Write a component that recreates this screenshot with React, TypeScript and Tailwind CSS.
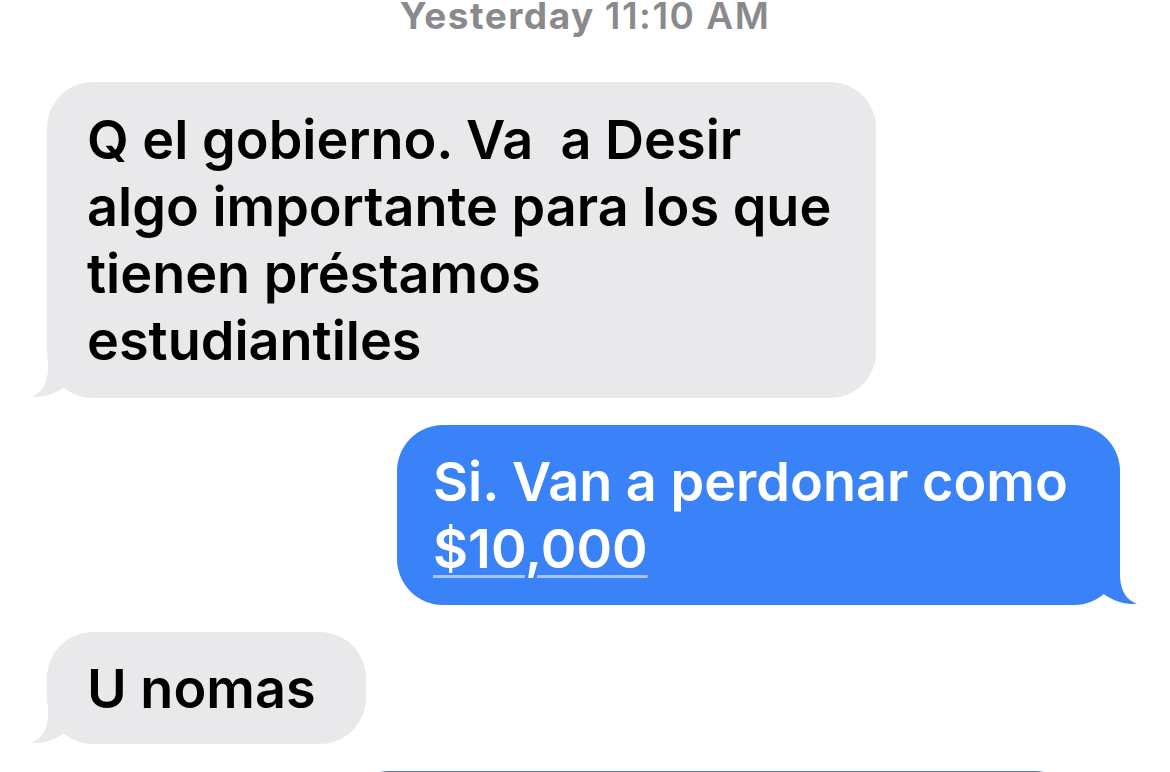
const font = { fontFamily: 'Inter, "Noto Sans", "Liberation Sans", sans-serif' };

function TailLeft() {
  return (
    <svg
      className="absolute bottom-0 left-[-17px] h-[50px] w-[60px]"
      viewBox="0 0 60 50"
      aria-hidden
    >
      <path d="M18 5 L18 22 C17 38 10 46 1 48.5 C10 50 22 48 36 38 L58 5 Z" fill="#e9e9eb" />
    </svg>
  );
}

function TailRight() {
  return (
    <svg
      className="absolute bottom-0 right-[-18px] h-[50px] w-[60px]"
      viewBox="0 0 60 50"
      aria-hidden
    >
      <path d="M42 5 L42 22 C43 38 50 46 59 48.5 C50 50 38 48 24 38 L2 5 Z" fill="#3a82f7" />
    </svg>
  );
}

function Received({ lines, width, pad }: { lines: string[]; width: string; pad: string }) {
  return (
    <div className={`relative self-start rounded-[46px] bg-[#e9e9eb] pl-10 ${pad} ${width}`}>
      <TailLeft />
      <p className="relative whitespace-nowrap text-[54px] font-semibold leading-[67px] text-black">
        {lines.map((l, i) => (
          <span key={i} className="block">
            {l}
          </span>
        ))}
      </p>
    </div>
  );
}

export default function App() {
  return (
    <div className="h-[772px] w-[1170px] overflow-hidden bg-white" style={font}>
      <div className="flex h-[31px] items-center justify-center text-[37px] leading-[31px] tracking-[1.5px] text-[#8a8a8e]">
        <span className="font-bold">Yesterday</span>
        <span className="ml-[10px] font-semibold">11:10 AM</span>
      </div>

      <div className="mt-[51px] flex flex-col gap-[27px] pl-[47px] pr-[50px]">
        <Received
          width="w-[829px]"
          pad="py-[24px]"
          lines={[
            'Q el gobierno. Va\u00a0 a Desir',
            'algo importante para los que',
            'tienen préstamos',
            'estudiantiles',
          ]}
        />

        <div className="relative w-[723px] self-end rounded-[46px] bg-[#3a82f7] py-[23px] pl-9">
          <TailRight />
          <p className="relative whitespace-nowrap text-[54px] font-semibold leading-[67px] text-white">
            <span className="block">Si. Van a perdonar como</span>
            <span className="block">
              <span className="underline decoration-white/55 decoration-[3px] underline-offset-[7px]">
                $10,000
              </span>
            </span>
          </p>
        </div>

        <Received width="w-[319px]" pad="pt-[23px] pb-[22px]" lines={['U nomas']} />

        <div className="ml-[302px] h-[40px] w-[726px] self-start rounded-t-[46px] border-t-2 border-[#4a78a8] bg-white" />
      </div>
    </div>
  );
}
